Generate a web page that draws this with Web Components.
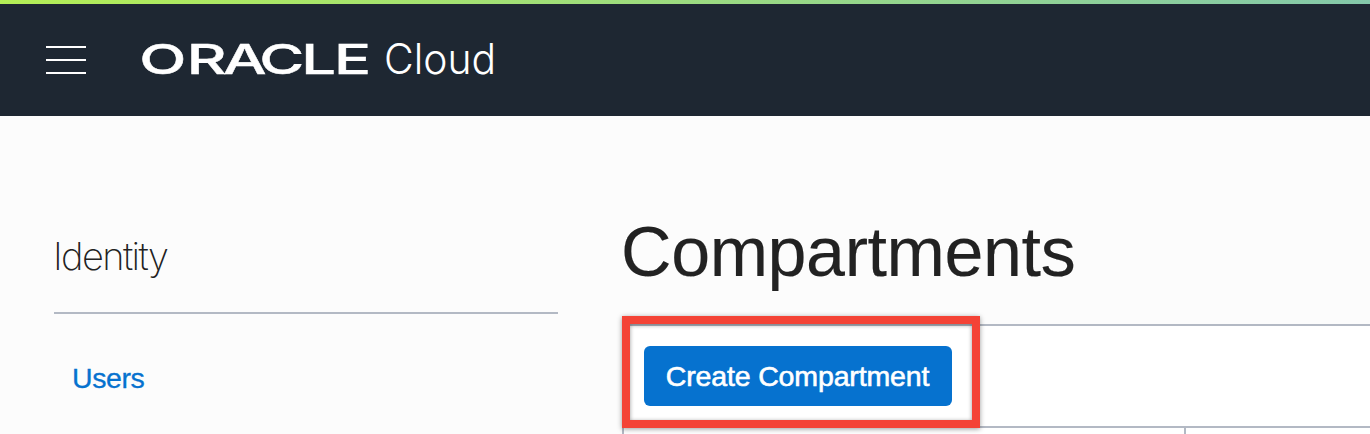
<!DOCTYPE html>
<html lang="en">
<head>
<meta charset="utf-8">
<title>Compartments</title>
<style>
html,body{margin:0;height:100%;overflow:hidden;background:#fcfcfc;color:#222;font-family:"Liberation Sans",Arial,sans-serif}
</style>
</head>
<body>
<cloud-app></cloud-app>
<script>
function define(name, html){
  const template = document.createElement('template');
  template.innerHTML = html;
  customElements.define(name, class extends HTMLElement{
    constructor(){
      super();
      this.attachShadow({mode:'open'}).append(template.content.cloneNode(true));
    }
  });
}

define('menu-toggle', `<style>
:host{display:block;width:40px;height:28px}
svg{display:block}
</style><svg width="40" height="28" fill="#fff"><path d="M0 0h40v2H0zM0 13h40v2H0zM0 26h40v2H0z"/></svg>`);

define('cloud-brand', `<style>
:host{display:block;color:#fff;width:360px;height:50px}
svg{display:block;overflow:visible}
.mark{font:500 41px Inter,sans-serif;stroke:#fff;stroke-width:.4px}
.product{font:300 42px Inter,sans-serif}
</style><svg width="360" height="50" fill="#fff">
<text class="mark" transform="scale(1.5 1)" y="39" x="-1.2 30.5 54.6 78.8 106.9 128.7">ORACLE</text>
<text class="product" y="39" x="243" textLength="112" lengthAdjust="spacingAndGlyphs">Cloud</text>
</svg>`);

define('top-bar', `<style>
:host{display:flex;align-items:center;box-sizing:border-box;height:116px;padding:0 46px;
border-top:4px solid;border-image:linear-gradient(90deg,#b4ee56,#84c8aa) 1;background:#1e2732}
cloud-brand{margin-left:55px}
</style><menu-toggle></menu-toggle><cloud-brand></cloud-brand>`);

define('side-nav', `<style>
:host{display:block;width:504px;padding-top:113px}
h2{margin:0;height:83px;border-bottom:2px solid #b3b9c4;font:250 38px/54px Inter,sans-serif;letter-spacing:-1.6px;text-indent:-1px}
slot{display:block;padding:44px 0 0 18px}
</style><h2>Identity</h2><slot></slot>`);

define('nav-link', `<style>
:host{display:block;font-size:28.5px;line-height:40px;letter-spacing:-.4px;color:#0672cf;-webkit-text-stroke:.3px #0672cf}
</style><slot></slot>`);

define('action-button', `<style>
:host{display:block}
button{display:block;box-sizing:border-box;width:308px;height:60px;border:0;border-radius:6px;padding:0;background:#0672cf;color:#fff;
font:28.5px/60px "Liberation Sans",Arial,sans-serif;letter-spacing:-.14px;-webkit-text-stroke:.6px #fff;white-space:nowrap;text-indent:-1px}
</style><button><slot></slot></button>`);

define('focus-frame', `<style>
:host{display:block;position:absolute;left:-2px;top:-10px;width:342px;height:96px;border:8px solid #f44336;
box-shadow:0 1px 5px rgba(0,0,0,.4),inset 0 1px 4px rgba(0,0,0,.4)}
</style>`);

define('data-panel', `<style>
:host{display:block;position:relative;height:110px;border:2px solid #b3b9c4;border-width:2px 0 0 2px;background:#fff}
.tools{display:flex;box-sizing:border-box;height:100px;padding:20px}
.columns{display:grid;grid-template-columns:560px 1fr;height:20px;border-top:2px solid #b3b9c4}
.columns i+i{border-left:2px solid #b3b9c4}
</style><div class="tools"><slot></slot></div><div class="columns"><i></i><i></i></div><focus-frame></focus-frame>`);

define('main-view', `<style>
:host{display:block;flex:1;padding-top:94px;min-width:0}
h1{margin:0;height:114px;font-size:70px;line-height:84px;font-weight:400;letter-spacing:-.4px;text-indent:-1px;white-space:nowrap;-webkit-text-stroke:.15px #222}
</style><h1>Compartments</h1><slot></slot>`);

define('cloud-app', `<style>
:host{display:block;height:434px;overflow:hidden}
.body{display:flex;gap:64px;padding-left:54px}
</style><top-bar></top-bar><div class="body">
<side-nav><nav-link>Users</nav-link></side-nav>
<main-view><data-panel><action-button>Create Compartment</action-button></data-panel></main-view>
</div>`);
</script>
</body>
</html>
